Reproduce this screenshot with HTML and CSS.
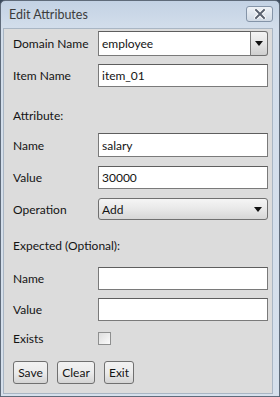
FILE: index.html
```html
<!DOCTYPE html>
<html lang="en">
<head>
    <meta charset="UTF-8">
    <title>Edit Attributes</title>
    <link rel="stylesheet" href="styles.css">
</head>
<body>
    <div class="window">
        <div class="title-bar">
            <span class="title">Edit Attributes</span>
            <div class="close-btn">
                <svg width="14" height="10" viewBox="0 0 14 10">
                    <path d="M3 1 L11 9 M11 1 L3 9" stroke="#fff" stroke-width="4" stroke-linecap="round"/>
                    <path d="M3 1 L11 9 M11 1 L3 9" stroke="#5a6270" stroke-width="2" stroke-linecap="square"/>
                </svg>
            </div>
        </div>

        <div class="content">
            <div class="row row-domain">
                <label class="label">Domain Name</label>
                <div class="combo-edit">
                    <input type="text" class="field" value="employee" readonly>
                    <div class="drop-btn"><span class="arrow"></span></div>
                </div>
            </div>
            <div class="row row-item">
                <label class="label">Item Name</label>
                <input type="text" class="field" value="item_01" readonly>
            </div>

            <div class="row row-section">Attribute:</div>
            <div class="row row-name">
                <label class="label">Name</label>
                <input type="text" class="field" value="salary" readonly>
            </div>
            <div class="row row-value">
                <label class="label">Value</label>
                <input type="text" class="field" value="30000" readonly>
            </div>
            <div class="row row-op">
                <label class="label">Operation</label>
                <div class="combo">
                    <span>Add</span>
                    <span class="arrow"></span>
                </div>
            </div>

            <div class="row row-expected">Expected (Optional):</div>
            <div class="row row-name2">
                <label class="label">Name</label>
                <input type="text" class="field" value="" readonly>
            </div>
            <div class="row row-value2">
                <label class="label">Value</label>
                <input type="text" class="field" value="" readonly>
            </div>
            <div class="row row-exists">
                <label class="label">Exists</label>
                <span class="checkbox"></span>
            </div>

            <div class="buttons">
                <button class="btn btn-save">Save</button>
                <button class="btn btn-clear">Clear</button>
                <button class="btn btn-exit">Exit</button>
            </div>
        </div>
    </div>
</body>
</html>
```

FILE: styles.css
```css
body {
    margin: 0;
    background: #3b4a5c;
    font-family: Lato, 'Noto Sans', sans-serif;
    font-size: 12px;
    color: #141414;
}

.window {
    width: 280px;
    height: 397px;
    box-sizing: border-box;
    border: 1px solid #5f6b7a;
    border-radius: 5px 5px 0 0;
    background: linear-gradient(#c3d2e4, #d3deeb 28px, #d6e0ec);
    padding: 0 6px 2px 2px;
    display: flex;
    flex-direction: column;
}

.title-bar {
    height: 27px;
    display: flex;
    align-items: center;
    justify-content: space-between;
    padding-left: 6px;
    flex-shrink: 0;
}

.title {
    color: #3c3c3c;
    font-size: 12.5px;
    margin-top: -1px;
}

.close-btn {
    width: 25px;
    height: 14px;
    margin-top: -1px;
    border: 1px solid #8494a8;
    border-radius: 3px;
    background: linear-gradient(#eef2f7, #d0d9e4);
    display: flex;
    align-items: center;
    justify-content: center;
}

.content {
    flex: 1;
    background: #dcdcdc;
    border: 1px solid #a9b6c4;
    padding: 2px 4px 0 9px;
    display: flex;
    flex-direction: column;
}

.row {
    display: flex;
    align-items: center;
}

.label {
    width: 85px;
    flex-shrink: 0;
}

.field {
    flex: 1;
    width: 0;
    min-width: 0;
    height: 100%;
    box-sizing: border-box;
    border: 1px solid #7a7a7a;
    border-top-color: #5e5e5e;
    background: #fff;
    padding: 0 3px;
    margin: 0;
    font-family: inherit;
    font-size: inherit;
    color: #141414;
    outline: none;
}

.row-domain { height: 25px; }
.row-item { height: 23px; margin-top: 8px; }
.row-section { height: 23px; margin-top: 17px; }
.row-name { height: 24px; margin-top: 6px; }
.row-value { height: 23px; margin-top: 9px; }
.row-op { height: 22px; margin-top: 9px; }
.row-expected { height: 23px; margin-top: 14px; }
.row-name2 { height: 23px; margin-top: 10px; }
.row-value2 { height: 23px; margin-top: 8px; }
.row-exists { height: 22px; margin-top: 6px; }

.combo-edit {
    flex: 1;
    min-width: 0;
    height: 100%;
    display: flex;
}

.drop-btn {
    width: 17px;
    flex-shrink: 0;
    box-sizing: border-box;
    border: 1px solid #707070;
    border-left: none;
    border-radius: 0 3px 3px 0;
    background: linear-gradient(#f4f4f4, #e4e4e4 50%, #cfcfcf);
    display: flex;
    align-items: center;
    justify-content: center;
}

.arrow {
    width: 0;
    height: 0;
    border-left: 4px solid transparent;
    border-right: 4px solid transparent;
    border-top: 5px solid #111;
}

.combo {
    flex: 1;
    height: 100%;
    box-sizing: border-box;
    border: 1px solid #707070;
    border-radius: 3px;
    background: linear-gradient(#f5f5f5, #e8e8e8 50%, #d6d6d6);
    display: flex;
    align-items: center;
    justify-content: space-between;
    padding: 0 5px 0 3px;
}

.checkbox {
    width: 13px;
    height: 13px;
    box-sizing: border-box;
    border: 1px solid #8e8f8f;
    background: linear-gradient(135deg, #dedede, #fbfbfb);
}

.buttons {
    display: flex;
    gap: 9px;
    margin-top: 12px;
    height: 23px;
}

.btn {
    height: 23px;
    box-sizing: border-box;
    border: 1px solid #707070;
    border-radius: 3px;
    background: linear-gradient(#f2f2f2, #ebebeb 50%, #d4d4d4);
    font-family: inherit;
    font-size: inherit;
    color: #141414;
    padding: 0;
}

.btn-save { width: 35px; }
.btn-clear { width: 38px; }
.btn-exit { width: 30px; }
```
